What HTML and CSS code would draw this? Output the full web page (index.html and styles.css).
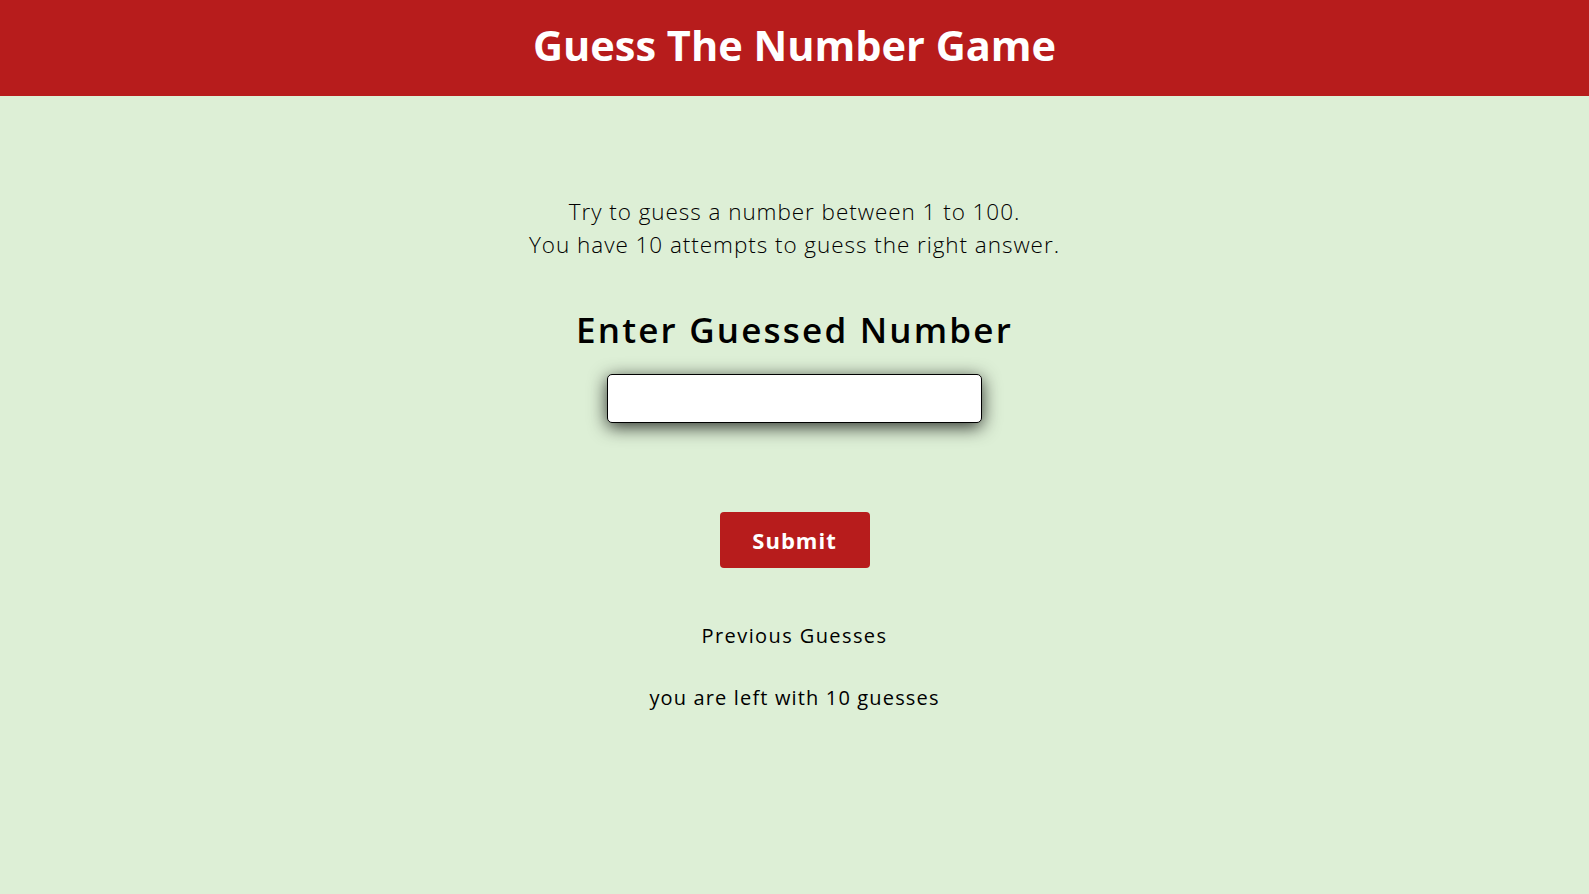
FILE: index.html
```html
<!DOCTYPE html>
<html lang="en">
<head>
<meta charset="utf-8">
<title>Guess The Number Game</title>
<link rel="stylesheet" href="styles.css">
</head>
<body>
<header class="topbar">
  <h1 class="title">Guess The Number Game</h1>
</header>
<main class="game">
  <p class="intro">Try to guess a number between 1 to 100.<br>You have 10 attempts to guess the right answer.</p>
  <h2 class="prompt">Enter Guessed Number</h2>
  <input class="guess-input" type="text" aria-label="Guessed number">
  <button class="submit-btn" type="button">Submit</button>
  <p class="previous">Previous Guesses</p>
  <p class="remaining">you are left with 10 guesses</p>
</main>
</body>
</html>
```
FILE: styles.css
```css
html, body {
  margin: 0;
  padding: 0;
}
body {
  background: #ddefd6;
  font-family: "Open Sans", "Liberation Sans", sans-serif;
  color: #000;
  min-height: 100vh;
}
.topbar {
  background: #b71c1c;
  height: 96px;
  display: flex;
  align-items: center;
  justify-content: center;
}
.title {
  margin: 0 0 4px;
  color: #fff;
  font-size: 41.5px;
  font-weight: 700;
  line-height: 1;
}
.game {
  display: flex;
  flex-direction: column;
  align-items: center;
  text-align: center;
}
.intro {
  margin: 99px 0 0;
  font-size: 22.5px;
  font-weight: 300;
  line-height: 33px;
  letter-spacing: 0.95px;
}
.prompt {
  margin: 47px 0 0;
  font-size: 35px;
  font-weight: 600;
  line-height: 44px;
  letter-spacing: 2.2px;
}
.guess-input {
  margin-top: 22px;
  box-sizing: border-box;
  width: 375px;
  height: 49px;
  border: 1px solid #000;
  border-radius: 5px;
  background: #fff;
  box-shadow: 0 4px 18px rgba(0, 0, 0, 0.8);
  font-size: 20px;
  padding: 0 10px;
  outline: none;
}
.submit-btn {
  margin-top: 89px;
  width: 150px;
  height: 56px;
  border: none;
  border-radius: 4px;
  background: #b71c1c;
  color: #fff;
  font-family: inherit;
  font-size: 22px;
  font-weight: 700;
  letter-spacing: 1px;
  cursor: pointer;
}
.previous {
  margin: 53px 0 0;
  font-size: 20px;
  line-height: 30px;
  letter-spacing: 1.4px;
}
.remaining {
  margin: 32px 0 0;
  font-size: 20px;
  line-height: 30px;
  letter-spacing: 1.15px;
}
```
